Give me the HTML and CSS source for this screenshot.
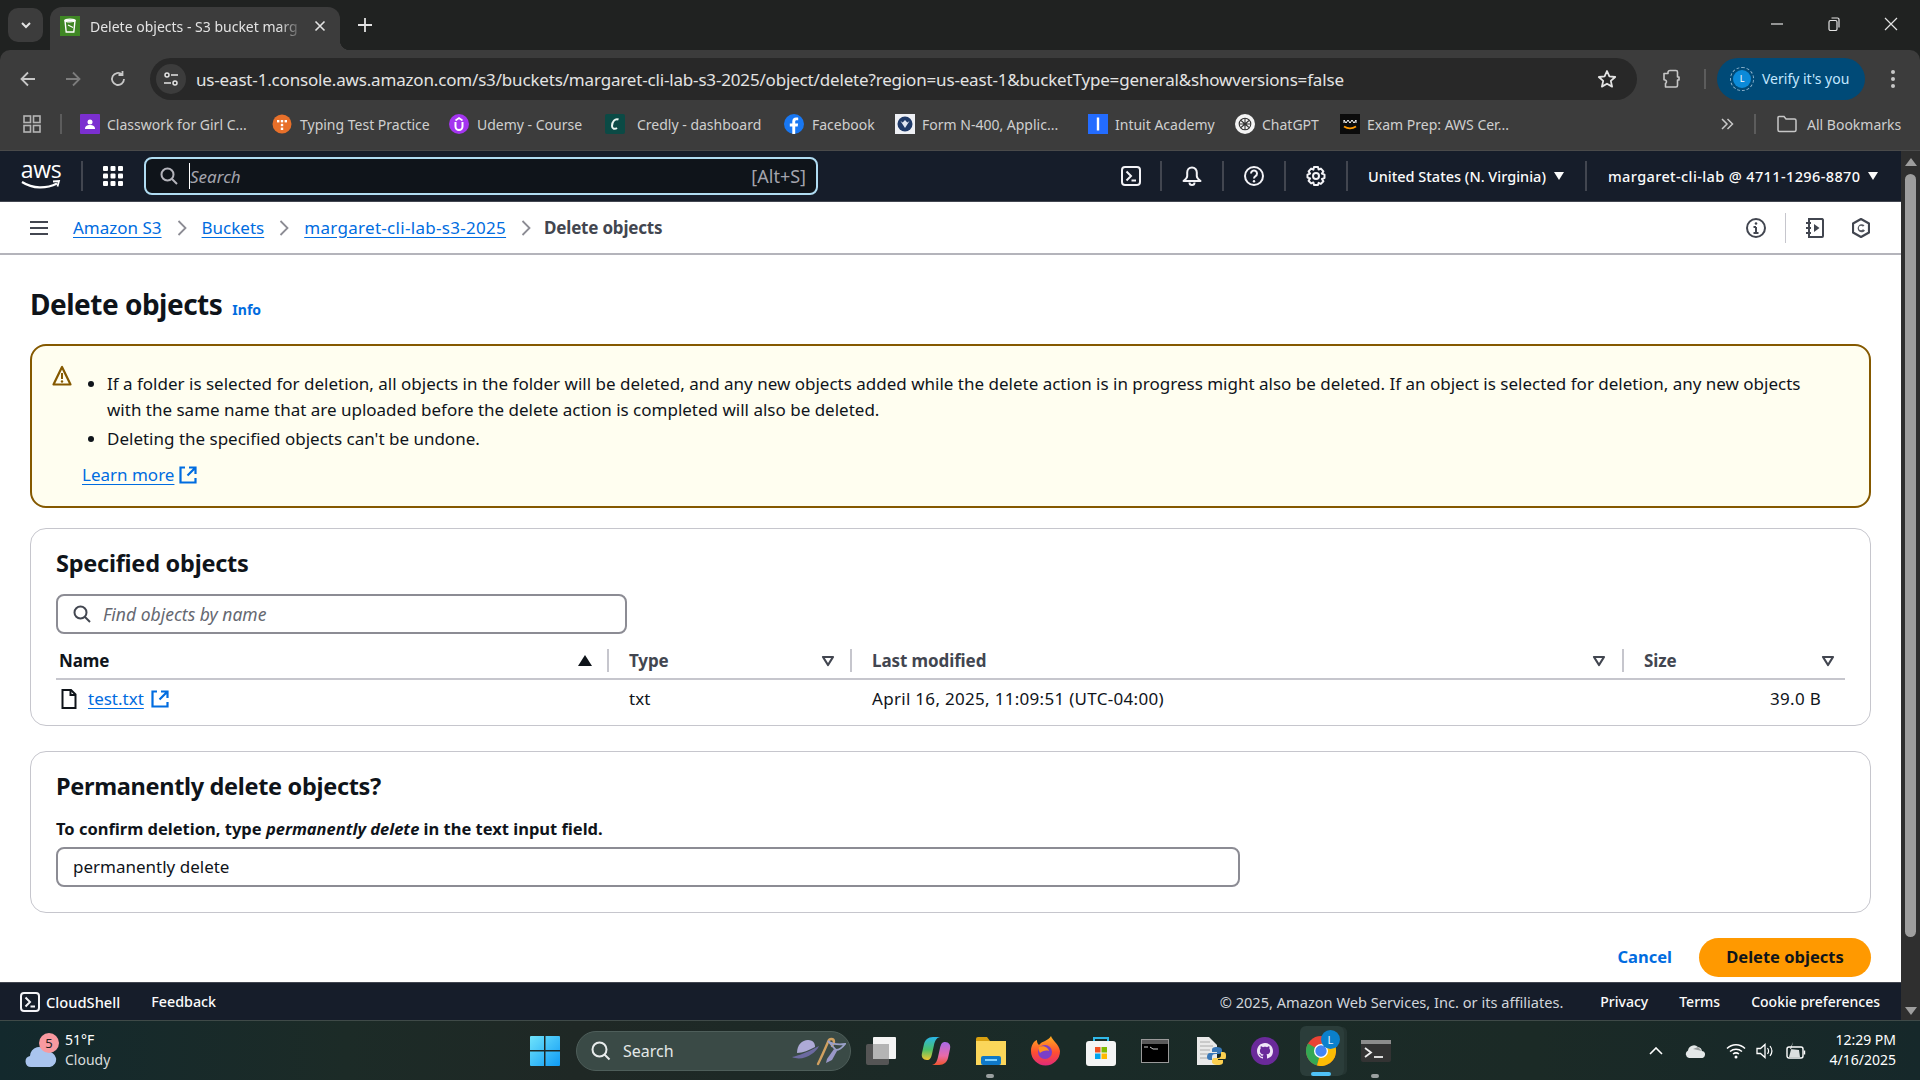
FILE: index.html
```html
<!DOCTYPE html>
<html lang="en">
<head>
<meta charset="utf-8">
<title>Delete objects - S3 bucket</title>
<link rel="stylesheet" href="styles.css">
</head>
<body>
<header class="browser">
  <div class="tabstrip">
    <button class="tablist"><svg width="14" height="14" viewBox="0 0 14 14"><path d="M3 5l4 4 4-4" fill="none" stroke="#e3e3e3" stroke-width="2"/></svg></button>
    <div class="tab">
      <svg class="fav" width="20" height="20" viewBox="0 0 20 20"><rect width="20" height="20" fill="#3f8624"/><path d="M5 4.500h10l-1.200 11.500H6.200z" fill="none" stroke="#fff" stroke-width="1.400"/><ellipse cx="10" cy="4.500" rx="5" ry="1.400" fill="none" stroke="#fff" stroke-width="1.200"/><path d="M8 9l5 2.500" stroke="#fff" stroke-width="1.200"/></svg>
      <span class="tabtitle">Delete objects - S3 bucket marg</span>
      <svg width="12" height="12" viewBox="0 0 12 12"><path d="M1.500 1.500l9 9M10.500 1.500l-9 9" stroke="#e3e3e3" stroke-width="1.600"/></svg>
    </div>
    <svg class="newtab" width="16" height="16" viewBox="0 0 16 16"><path d="M8 1v14M1 8h14" stroke="#e3e3e3" stroke-width="1.800"/></svg>
    <div class="winbtns">
      <svg width="14" height="14" viewBox="0 0 14 14"><path d="M1 7h12" stroke="#e3e3e3" stroke-width="1.200"/></svg>
      <svg width="14" height="14" viewBox="0 0 14 14"><rect x="2" y="3.500" width="8" height="10" rx="1.500" fill="none" stroke="#e3e3e3" stroke-width="1.200"/><path d="M4.500 1h6a1.500 1.500 0 0 1 1.500 1.500v8" fill="none" stroke="#e3e3e3" stroke-width="1.200"/></svg>
      <svg width="14" height="14" viewBox="0 0 14 14"><path d="M1 1l12 12M13 1L1 13" stroke="#e3e3e3" stroke-width="1.200"/></svg>
    </div>
  </div>
  <div class="toolbar">
    <div class="navbtns">
      <svg width="18" height="18" viewBox="0 0 18 18"><path d="M16 9H3M9 2.500L2.500 9 9 15.500" fill="none" stroke="#c7c7c7" stroke-width="1.800"/></svg>
      <svg width="18" height="18" viewBox="0 0 18 18"><path d="M2 9h13M9 2.500L15.500 9 9 15.500" fill="none" stroke="#7d7d7d" stroke-width="1.800"/></svg>
      <svg width="18" height="18" viewBox="0 0 18 18"><path d="M15 9a6 6 0 1 1-2-4.500M13.500 1v4h-4" fill="none" stroke="#c7c7c7" stroke-width="1.800"/></svg>
    </div>
    <div class="omnibox">
      <span class="siteinfo"><svg width="16" height="16" viewBox="0 0 16 16"><circle cx="4" cy="4" r="2" fill="none" stroke="#e3e3e3" stroke-width="1.500"/><circle cx="12" cy="12" r="2" fill="none" stroke="#e3e3e3" stroke-width="1.500"/><path d="M8 4h7M1 12h7" stroke="#e3e3e3" stroke-width="1.500"/></svg></span>
      <span class="url">us-east-1.console.aws.amazon.com/s3/buckets/margaret-cli-lab-s3-2025/object/delete?region=us-east-1&amp;bucketType=general&amp;showversions=false</span>
      <svg class="star" width="20" height="20" viewBox="0 0 20 20"><path d="M10 2l2.400 5.400 5.800.6-4.400 3.900 1.300 5.700L10 14.700l-5.100 2.900 1.300-5.700L1.800 8l5.800-.6z" fill="none" stroke="#e3e3e3" stroke-width="1.800" stroke-linejoin="round"/></svg>
    </div>
    <svg class="ext" width="20" height="20" viewBox="0 0 20 20"><path d="M3 4.500h4V3a2 2 0 0 1 2-1.500h6a1.500 1.500 0 0 1 1.500 1.500v5h1.500v3h-1.500v5.500a1.500 1.500 0 0 1-1.500 1.500H4.500v-3.500a2 2 0 0 0 .5-3c-.5-.5-1-.7-2-.7z" fill="none" stroke="#c7c7c7" stroke-width="1.600" stroke-linejoin="round"/></svg>
    <span class="tsep"></span>
    <div class="verify">
      <span class="avatar"><span class="avatar-l">L</span></span>
      <span>Verify it's you</span>
    </div>
    <svg class="kebab" width="6" height="20" viewBox="0 0 6 20"><circle cx="3" cy="3" r="2" fill="#c7c7c7"/><circle cx="3" cy="10" r="2" fill="#c7c7c7"/><circle cx="3" cy="17" r="2" fill="#c7c7c7"/></svg>
  </div>
  <div class="bookmarks">
    <svg class="bm-apps" width="18" height="18" viewBox="0 0 18 18"><g fill="none" stroke="#b5b5b5" stroke-width="1.600"><rect x="1" y="1" width="6.500" height="6.500"/><rect x="10.500" y="1" width="6.500" height="6.500"/><rect x="1" y="10.500" width="6.500" height="6.500"/><rect x="10.500" y="10.500" width="6.500" height="6.500"/></g></svg>
    <span class="bsep"></span>
    <a class="bm w1"><svg width="20" height="20" viewBox="0 0 20 20"><rect width="20" height="20" rx="1" fill="#7b2fd0"/><circle cx="10" cy="8" r="2.500" fill="#fff"/><path d="M5 15c0-3 2-4 5-4s5 1 5 4z" fill="#fff"/></svg><span>Classwork for Girl C...</span></a>
    <a class="bm w2"><svg width="20" height="20" viewBox="0 0 20 20"><circle cx="10" cy="10" r="9.500" fill="#e8702a"/><g fill="#fff"><rect x="5" y="6" width="2.400" height="2.400"/><rect x="8.800" y="6" width="2.400" height="2.400"/><rect x="12.600" y="6" width="2.400" height="2.400"/><rect x="8.800" y="9.800" width="2.400" height="2.400"/><rect x="8.800" y="13.600" width="2.400" height="2.400"/></g></svg><span>Typing Test Practice</span></a>
    <a class="bm w3"><svg width="20" height="20" viewBox="0 0 20 20"><circle cx="10" cy="10" r="10" fill="#a435f0"/><path d="M6.500 8v4.500a3.500 3.500 0 0 0 7 0V8" fill="none" stroke="#fff" stroke-width="2"/><path d="M6.500 6.500L10 4l3.500 2.500" fill="none" stroke="#fff" stroke-width="1.600"/></svg><span>Udemy - Course</span></a>
    <a class="bm w4"><svg width="20" height="20" viewBox="0 0 20 20"><rect width="20" height="20" rx="2" fill="#0b4a45"/><path d="M13.500 5.500C10 4 7 8 7 12c0 3 3 3.500 5 2" fill="none" stroke="#e8f5f0" stroke-width="2"/></svg><span>Credly - dashboard</span></a>
    <a class="bm w5"><svg width="20" height="20" viewBox="0 0 20 20"><circle cx="10" cy="10" r="10" fill="#1877f2"/><path d="M11.200 20v-7.500h2.500l.4-3h-2.900V7.800c0-.9.300-1.500 1.500-1.500h1.500V3.700c-.3 0-1.200-.1-2.200-.1-2.200 0-3.700 1.300-3.700 3.800v2.100H5.800v3h2.500V20z" fill="#fff"/></svg><span>Facebook</span></a>
    <a class="bm w6"><svg width="20" height="20" viewBox="0 0 20 20"><rect width="20" height="20" fill="#eef0f5"/><circle cx="10" cy="10" r="7.500" fill="#1f3a68"/><path d="M5.500 7L10 14l4.500-7-2.200 1.500L10 6 7.700 8.500z" fill="#dfe6f2"/></svg><span>Form N-400, Applic...</span></a>
    <a class="bm w7"><svg width="20" height="20" viewBox="0 0 20 20"><rect width="20" height="20" fill="#236cff"/><rect x="8.800" y="3.500" width="2.400" height="13" fill="#fff"/></svg><span>Intuit Academy</span></a>
    <a class="bm w8"><svg width="20" height="20" viewBox="0 0 20 20"><circle cx="10" cy="10" r="10" fill="#f4f4f4"/><g fill="none" stroke="#333" stroke-width="1.100"><circle cx="10" cy="10" r="5.800"/><path d="M6 6.500l8 7M14 6.500l-8 7M10 4v12M4.500 10h11"/></g></svg><span>ChatGPT</span></a>
    <a class="bm w9"><svg width="20" height="20" viewBox="0 0 20 20"><rect width="20" height="20" fill="#0b0b0b"/><path d="M4 12.500c4 2.500 8 2.500 12 0" fill="none" stroke="#f90" stroke-width="1.800"/><path d="M4 9V6l2 3 2-3 2 3 2-3 2 3 2-3v3" fill="none" stroke="#fff" stroke-width="1"/></svg><span>Exam Prep: AWS Cer...</span></a>
    <svg class="bm-more" width="14" height="14" viewBox="0 0 14 14"><path d="M2 2l5 5-5 5M7.500 2l5 5-5 5" fill="none" stroke="#c7c7c7" stroke-width="1.500"/></svg>
    <span class="bsep b2"></span>
    <a class="bm allb"><svg width="20" height="18" viewBox="0 0 20 18"><path d="M1 2.500a1 1 0 0 1 1-1h5l2 2.500h8.500a1.500 1.500 0 0 1 1.500 1.500v9.500a1.500 1.500 0 0 1-1.500 1.500H2.500A1.500 1.500 0 0 1 1 15z" fill="none" stroke="#c7c7c7" stroke-width="1.500"/></svg><span>All Bookmarks</span></a>
  </div>
</header>

<div class="console">
  <div class="console-main">
    <nav class="awsnav">
      <div class="awslogo"><span class="awstext">aws</span><svg width="40" height="11" viewBox="0 0 40 11"><path d="M1 2c11 7 24 7 35 1.500" fill="none" stroke="#fff" stroke-width="2.200"/><path d="M32 1.500l6-.5-1.500 5.500" fill="none" stroke="#fff" stroke-width="1.800"/></svg></div>
      <span class="nsep first"></span>
      <svg class="nineg" width="20" height="20" viewBox="0 0 20 20"><g fill="#fff"><rect width="5" height="5" rx="1"/><rect x="7.500" width="5" height="5" rx="1"/><rect x="15" width="5" height="5" rx="1"/><rect y="7.500" width="5" height="5" rx="1"/><rect x="7.500" y="7.500" width="5" height="5" rx="1"/><rect x="15" y="7.500" width="5" height="5" rx="1"/><rect y="15" width="5" height="5" rx="1"/><rect x="7.500" y="15" width="5" height="5" rx="1"/><rect x="15" y="15" width="5" height="5" rx="1"/></g></svg>
      <div class="awssearch">
        <svg width="18" height="18" viewBox="0 0 18 18"><circle cx="7.500" cy="7.500" r="6" fill="none" stroke="#b4b4bb" stroke-width="2"/><path d="M12 12l5 5" stroke="#b4b4bb" stroke-width="2"/></svg>
        <span class="caret"></span>
        <span class="ph">Search</span>
        <span class="kbd">[Alt+S]</span>
      </div>
      <div class="navright">
        <span class="slot"><svg class="s1" width="20" height="20" viewBox="0 0 20 20"><rect x="1" y="1" width="18" height="18" rx="3" fill="none" stroke="#f3f3f7" stroke-width="2"/><path d="M5.500 5.500l4.500 4.500-4.500 4.500M10.500 14.500h4.500" fill="none" stroke="#f3f3f7" stroke-width="2"/></svg></span>
        <span class="slot"><svg width="20" height="20" viewBox="0 0 20 20"><path d="M10 1.500c-3 0-4.800 2.200-4.800 5v3.500c0 2-1 3-3.700 5h17c-2.700-2-3.700-3-3.700-5V6.500c0-2.800-1.800-5-4.800-5z" fill="none" stroke="#f3f3f7" stroke-width="2" stroke-linejoin="round"/><path d="M7.500 16.500a2.500 2.500 0 0 0 5 0" fill="none" stroke="#f3f3f7" stroke-width="2"/></svg></span>
        <span class="slot"><svg width="20" height="20" viewBox="0 0 20 20"><circle cx="10" cy="10" r="9" fill="none" stroke="#f3f3f7" stroke-width="2"/><path d="M7 7.500a3 3 0 1 1 4.500 2.600c-1 .6-1.500 1.100-1.500 2.400" fill="none" stroke="#f3f3f7" stroke-width="2"/><circle cx="10" cy="15.200" r="1.200" fill="#f3f3f7"/></svg></span>
        <span class="slot"><svg width="20" height="20" viewBox="0 0 20 20"><circle cx="10" cy="10" r="3" fill="none" stroke="#f3f3f7" stroke-width="2"/><path d="M8 1h4l.6 2.600 2.300-1 2.500 2.800-1.500 2.200 2.600 1v3.500l-2.600.8 1.500 2.300-2.500 2.700-2.300-1L12 19H8l-.6-2.600-2.300 1-2.500-2.700 1.500-2.300-2.600-.8V8.600l2.600-1-1.500-2.200 2.500-2.800 2.300 1z" fill="none" stroke="#f3f3f7" stroke-width="2" stroke-linejoin="round"/></svg></span>
        <span class="slot region"><span>United States (N. Virginia)</span><i class="tri"></i></span>
        <span class="account"><span class="acct">margaret-cli-lab @ 4711-1296-8870</span><i class="tri"></i></span>
      </div>
    </nav>

    <div class="crumbbar">
      <svg class="burger" width="18" height="14" viewBox="0 0 18 14"><path d="M0 1h18M0 7h18M0 13h18" stroke="#424650" stroke-width="2"/></svg>
      <a class="lnk crumb c1">Amazon S3</a>
      <svg class="chev" width="10" height="16" viewBox="0 0 10 16"><path d="M1.500 1l7 7-7 7" fill="none" stroke="#8c8c94" stroke-width="1.800"/></svg>
      <a class="lnk crumb c2">Buckets</a>
      <svg class="chev" width="10" height="16" viewBox="0 0 10 16"><path d="M1.500 1l7 7-7 7" fill="none" stroke="#8c8c94" stroke-width="1.800"/></svg>
      <a class="lnk crumb c3">margaret-cli-lab-s3-2025</a>
      <svg class="chev last" width="10" height="16" viewBox="0 0 10 16"><path d="M1.500 1l7 7-7 7" fill="none" stroke="#8c8c94" stroke-width="1.800"/></svg>
      <b class="crumb-cur">Delete objects</b>
      <div class="crumb-right">
        <svg width="20" height="20" viewBox="0 0 20 20"><circle cx="10" cy="10" r="9" fill="none" stroke="#424650" stroke-width="2"/><path d="M10 9v6M7.500 15h5M7.500 9H10" fill="none" stroke="#424650" stroke-width="2"/><circle cx="10" cy="5.500" r="1.300" fill="#424650"/></svg>
        <span class="csep"></span>
        <svg class="nb" width="20" height="20" viewBox="0 0 20 20"><path d="M4 1h13a2 2 0 0 1 1 1v16a1 1 0 0 1-1 1H4z" fill="none" stroke="#424650" stroke-width="2"/><path d="M1 5h5M1 10h5M1 15h5" stroke="#424650" stroke-width="2"/><path d="M9 6v8l5.500-4z" fill="#424650"/></svg>
        <svg class="sh" width="18" height="20" viewBox="0 0 18 20"><path d="M9 1l8 4.500v9L9 19l-8-4.500v-9z" fill="none" stroke="#424650" stroke-width="2.200" stroke-linejoin="round"/><path d="M12.500 7.500A4 4 0 1 0 13 12.500L9 10z" fill="#424650" opacity=".9"/><circle cx="9" cy="10" r="2.200" fill="#fff"/></svg>
      </div>
    </div>

    <main class="content">
      <div class="titlerow">
        <h1>Delete objects</h1>
        <a class="info">Info</a>
      </div>

      <section class="alert">
        <svg class="warn" width="20" height="22" viewBox="0 0 20 22"><path d="M10 2L1.500 19.500h17z" fill="none" stroke="#855900" stroke-width="2.200" stroke-linejoin="round"/><path d="M10 8v6" stroke="#855900" stroke-width="2"/><circle cx="10" cy="16.500" r="1.200" fill="#855900"/></svg>
        <div class="alertbody">
          <ul>
            <li>If a folder is selected for deletion, all objects in the folder will be deleted, and any new objects added while the delete action is in progress might also be deleted. If an object is selected for deletion, any new objects with the same name that are uploaded before the delete action is completed will also be deleted.</li>
            <li>Deleting the specified objects can't be undone.</li>
          </ul>
          <div class="learn"><a class="lnk">Learn more</a><svg class="extlink" width="18" height="18" viewBox="0 0 18 18"><path d="M6 1.500H1.500v15h15V12M10 1.500h6.500V8M16 2l-7.500 7.500" fill="none" stroke="#006ce0" stroke-width="2.200"/></svg></div>
        </div>
      </section>

      <section class="card objects">
        <h2>Specified objects</h2>
        <div class="finder">
          <svg width="18" height="18" viewBox="0 0 18 18"><circle cx="7.500" cy="7.500" r="6" fill="none" stroke="#424650" stroke-width="2"/><path d="M12 12l5 5" stroke="#424650" stroke-width="2"/></svg>
          <span class="ph2">Find objects by name</span>
        </div>
        <div class="table">
          <div class="thead">
            <div class="col cname"><b class="dark">Name</b><i class="sortup"></i></div>
            <div class="col ctype"><b>Type</b><svg class="sort" width="14" height="12" viewBox="0 0 14 12"><path d="M2 2h10L7 10z" fill="none" stroke="#424650" stroke-width="2.200" stroke-linejoin="round"/></svg></div>
            <div class="col cmod"><b>Last modified</b><svg class="sort" width="14" height="12" viewBox="0 0 14 12"><path d="M2 2h10L7 10z" fill="none" stroke="#424650" stroke-width="2.200" stroke-linejoin="round"/></svg></div>
            <div class="col csize"><b>Size</b><svg class="sort" width="14" height="12" viewBox="0 0 14 12"><path d="M2 2h10L7 10z" fill="none" stroke="#424650" stroke-width="2.200" stroke-linejoin="round"/></svg></div>
          </div>
          <div class="trow">
            <div class="cell cname"><svg class="fileic" width="16" height="20" viewBox="0 0 16 20"><path d="M1.500 1h8.500l4.500 4.500V19h-13z" fill="none" stroke="#0f141a" stroke-width="2"/><path d="M9.500 1v5h5" fill="none" stroke="#0f141a" stroke-width="2"/></svg><a class="lnk">test.txt</a><svg class="extlink" width="18" height="18" viewBox="0 0 18 18"><path d="M6 1.500H1.500v15h15V12M10 1.500h6.500V8M16 2l-7.500 7.500" fill="none" stroke="#006ce0" stroke-width="2.200"/></svg></div>
            <div class="cell ctype">txt</div>
            <div class="cell cmod">April 16, 2025, 11:09:51 (UTC-04:00)</div>
            <div class="cell csize">39.0 B</div>
          </div>
        </div>
      </section>

      <section class="card confirm">
        <h2>Permanently delete objects?</h2>
        <label class="flabel">To confirm deletion, type <em>permanently delete</em> in the text input field.</label>
        <div class="textbox">permanently delete</div>
      </section>

      <div class="actions">
        <a class="cancel">Cancel</a>
        <a class="primary">Delete objects</a>
      </div>
    </main>

    <footer class="awsfoot">
      <svg width="20" height="20" viewBox="0 0 20 20"><rect x="1" y="1" width="18" height="18" rx="3" fill="none" stroke="#f3f3f7" stroke-width="2"/><path d="M5.500 5.500l4.500 4.500-4.500 4.500M10.500 14.500h4.500" fill="none" stroke="#f3f3f7" stroke-width="2"/></svg>
      <b class="fcs">CloudShell</b>
      <b class="ffb">Feedback</b>
      <div class="fright">
        <span class="copy">© 2025, Amazon Web Services, Inc. or its affiliates.</span>
        <b>Privacy</b>
        <b>Terms</b>
        <b>Cookie preferences</b>
      </div>
    </footer>
  </div>
  <aside class="scrollbar">
    <i class="sup"></i>
    <i class="thumb"></i>
    <i class="sdown"></i>
  </aside>
</div>

<footer class="taskbar">
  <div class="weather">
    <span class="wicon">
      <svg width="32" height="24" viewBox="0 0 32 24"><path d="M6 23a5.500 5.500 0 0 1-1-10.900A9 9 0 0 1 22 8a7.500 7.500 0 0 1 3 15z" fill="#a9c4ee"/></svg>
      <span class="wbadge">5</span>
    </span>
    <span class="wtext"><span>51°F</span><span class="wsub">Cloudy</span></span>
  </div>
  <div class="apps">
    <span class="app"><svg width="30" height="30" viewBox="0 0 30 30"><defs><linearGradient id="win" x1="0" y1="0" x2="1" y2="1"><stop offset="0" stop-color="#6fe3fb"/><stop offset="1" stop-color="#0f9bf5"/></linearGradient></defs><path d="M0 1a1 1 0 0 1 1-1h13v14H0zM15.500 0H29a1 1 0 0 1 1 1v13H15.500zM0 15.500h14V30H1a1 1 0 0 1-1-1zM15.500 15.500H30V29a1 1 0 0 1-1 1H15.500z" fill="url(#win)"/></svg></span>
    <div class="tsearch">
      <svg width="20" height="20" viewBox="0 0 20 20"><circle cx="8.500" cy="8.500" r="7" fill="none" stroke="#e8ecec" stroke-width="2"/><path d="M13.500 13.500l5 5" stroke="#e8ecec" stroke-width="2"/></svg>
      <span>Search</span>
      <svg class="deco" width="56" height="30" viewBox="0 0 56 30"><path d="M2 21c6-1 18-6 27-11-3 7-16 16-27 11z" fill="#6c6aa0"/><path d="M7 17c0-8 5-13 11-13s7 4 7 7c-6 3-12 6-18 6z" fill="#aeaad6"/><path d="M28 28c3-6 7-15 10-22 1-4 6-4 6 0 0 2-1 3-2 4" fill="none" stroke="#d0a060" stroke-width="2.400" stroke-linecap="round"/><path d="M38 5c4 3 10 4 17 3-3 4-6 6-9 6z" fill="none" stroke="#9aa0c8" stroke-width="1.800"/><path d="M44 13l-7 10-1 4 6-3 5-9z" fill="#9a98c8"/></svg>
    </div>
    <span class="app"><svg width="30" height="28" viewBox="0 0 30 28"><rect x="0" y="7" width="23" height="21" rx="2" fill="#555"/><rect x="7" y="0" width="23" height="22" rx="1" fill="#f4f4f4"/><rect x="7" y="7" width="16" height="15" fill="#b4b4b4"/></svg></span>
    <span class="app"><svg width="30" height="30" viewBox="0 0 30 30"><defs><linearGradient id="copa" x1="0" y1="0" x2="0" y2="1"><stop offset="0" stop-color="#29b6e8"/><stop offset=".55" stop-color="#4cc06a"/><stop offset="1" stop-color="#f2c530"/></linearGradient><linearGradient id="copb" x1="0" y1="0" x2="0" y2="1"><stop offset="0" stop-color="#a86ae8"/><stop offset=".6" stop-color="#e86aa8"/><stop offset="1" stop-color="#f0552e"/></linearGradient></defs><path d="M12 1h7c-4 1-5 4-6 8l-2 9c-1 4-2 6-5 6-4 0-6-3-5-7l2-9c1-4 4-7 9-7z" fill="url(#copa)"/><path d="M18 29h-7c4-1 5-4 6-8l2-9c1-4 2-6 5-6 4 0 6 3 5 7l-2 9c-1 4-4 7-9 7z" fill="url(#copb)"/></svg></span>
    <span class="app dotted"><svg width="30" height="28" viewBox="0 0 30 28"><path d="M0 2a2 2 0 0 1 2-2h9l3 4h-14z" fill="#d8a010"/><rect y="4" width="30" height="24" fill="#fbd65a"/><rect x="5" y="19" width="20" height="9" rx="2" fill="#0f78c8"/><rect x="9" y="22" width="12" height="2" fill="#7fd0ff"/></svg><i class="dot"></i></span>
    <span class="app"><svg width="30" height="30" viewBox="0 0 30 30"><defs><linearGradient id="ff" x1="0" y1="0" x2="0" y2="1"><stop offset="0" stop-color="#ffb020"/><stop offset=".55" stop-color="#ff5030"/><stop offset="1" stop-color="#e02a7a"/></linearGradient></defs><path d="M20 0c1 4 8 8 9 15a14.500 14.500 0 1 1-29 0C0 9 3 5 6 4c0 2 0 3 2 5 3-4 9-4 12-9z" fill="url(#ff)"/><circle cx="14" cy="16" r="7" fill="#7b3fc8"/><path d="M8 11c4-2 9 0 10 4-3-1-7 0-9 2-1-2-2-4-1-6z" fill="#ff9020"/></svg></span>
    <span class="app"><svg width="30" height="30" viewBox="0 0 30 30"><path d="M8 7V2h14v5" fill="none" stroke="#30b8e8" stroke-width="2"/><rect y="5" width="30" height="25" rx="3" fill="#f4f4f4"/><rect x="9" y="11" width="5.500" height="5.500" fill="#f25022"/><rect x="15.500" y="11" width="5.500" height="5.500" fill="#7fba00"/><rect x="9" y="17.500" width="5.500" height="5.500" fill="#00a4ef"/><rect x="15.500" y="17.500" width="5.500" height="5.500" fill="#ffb900"/></svg></span>
    <span class="app"><svg width="28" height="24" viewBox="0 0 28 24"><rect width="28" height="24" fill="#9a9a9a"/><rect x="1" y="1" width="26" height="4" fill="#5a5a5a"/><rect x="1" y="5" width="26" height="18" fill="#000"/><path d="M3 8h4M9 8l3 2h5" stroke="#ccc" stroke-width="1"/></svg></span>
    <span class="app"><svg width="30" height="30" viewBox="0 0 30 30"><path d="M1 1h12l8 8v20H1z" fill="#e9e9e9"/><path d="M4 6h10M4 10h13M4 14h10M4 18h10M4 22h10" stroke="#aaa" stroke-width="1"/><path d="M21 11c-4 0-5 1-5 3v2h5v1h-7c-2 0-3 2-3 4s1 3 3 3h2v-3c0-2 1-3 3-3h4c2 0 3-1 3-3v-1c0-2-2-3-5-3z" fill="#3a78b8"/><path d="M22 29c4 0 5-1 5-3v-2h-5v-1h7c1 0 1-2 1-4s-1-3-3-3h-2v3c0 2-1 3-3 3h-4c-1 0-2 1-2 3v1c0 2 3 3 6 3z" fill="#fcd050"/></svg></span>
    <span class="app"><svg width="28" height="28" viewBox="-6 -6 28 28"><circle cx="8" cy="8" r="14" fill="#6a2a9a"/><path d="M8 0C3.580 0 0 3.580 0 8c0 3.540 2.290 6.530 5.470 7.590.4.070.55-.17.55-.38 0-.19-.01-.82-.01-1.490-2.010.37-2.530-.49-2.690-.94-.09-.23-.48-.94-.82-1.130-.28-.15-.68-.52-.01-.53.63-.01 1.080.58 1.230.82.72 1.210 1.870.87 2.330.66.070-.52.28-.87.51-1.070-1.780-.2-3.640-.89-3.640-3.950 0-.87.31-1.590.82-2.150-.08-.2-.36-1.020.08-2.120 0 0 .67-.21 2.200.82.64-.18 1.320-.27 2-.27s1.360.09 2 .27c1.530-1.040 2.200-.82 2.200-.82.44 1.100.16 1.920.08 2.120.51.56.82 1.270.82 2.150 0 3.070-1.870 3.750-3.650 3.950.29.25.54.73.54 1.480 0 1.070-.01 1.930-.01 2.200 0 .21.15.46.55.38A8.013 8.013 0 0 0 16 8c0-4.420-3.580-8-8-8z" fill="#f0e6f8"/></svg></span>
    <span class="app active"><svg width="30" height="30" viewBox="0 0 30 30"><circle cx="15" cy="15" r="15" fill="#ea4335"/><path d="M15 15L2 7.500A15 15 0 0 0 11 29.500z" fill="#34a853"/><path d="M15 7.500h13A15 15 0 0 1 11 29.500L15 15z" fill="#fbbc04"/><circle cx="15" cy="15" r="7" fill="#fff"/><circle cx="15" cy="15" r="5.700" fill="#4285f4"/></svg><span class="cbadge">L</span><i class="bar"></i></span>
    <span class="app dotted"><svg width="30" height="22" viewBox="0 0 30 22"><rect width="30" height="22" rx="2" fill="#333"/><rect width="30" height="4" fill="#8c8c8c"/><path d="M4 8l6 4.500L4 17" fill="none" stroke="#eee" stroke-width="1.800"/><path d="M13 17h9" stroke="#eee" stroke-width="1.800"/></svg><i class="dot"></i></span>
  </div>
  <div class="tray">
    <svg class="t1" width="14" height="8" viewBox="0 0 14 8"><path d="M1 7l6-6 6 6" fill="none" stroke="#fff" stroke-width="1.600"/></svg>
    <svg class="t2" width="20" height="14" viewBox="0 0 20 14"><path d="M4 14a4 4 0 0 1-1-7.500A6 6 0 0 1 13 3a5 5 0 0 1 4 4 3.500 3.500 0 0 1-1 7z" fill="#e4e8e8"/><path d="M8 5l5-2 4 4z" fill="#9a9e9e"/></svg>
    <svg class="t3" width="20" height="16" viewBox="0 0 20 16"><g fill="none" stroke="#fff" stroke-width="1.500"><path d="M1 5.500c5-5 13-5 18 0M4 8.500c3.500-3 8.500-3 12 0M7 11c2-1.500 4-1.500 6 0"/></g><circle cx="10" cy="14" r="1.500" fill="#fff"/></svg>
    <svg class="t4" width="18" height="16" viewBox="0 0 18 16"><path d="M1 5.500h3.500L9 1.500v13l-4.500-4H1z" fill="none" stroke="#fff" stroke-width="1.300"/><path d="M11.500 5c1.300 1.800 1.300 4.200 0 6M14 3c2.300 3 2.300 7 0 10" fill="none" stroke="#fff" stroke-width="1.200"/></svg>
    <svg class="t5" width="20" height="18" viewBox="0 0 20 18"><rect x="1" y="5" width="16" height="11" rx="2" fill="none" stroke="#fff" stroke-width="1.400"/><path d="M18.500 8.500v4" stroke="#fff" stroke-width="1.400"/><path d="M7 0L4 7l9 1 1 7H3z" fill="#fff" opacity=".85"/></svg>
    <div class="clock"><span>12:29 PM</span><span>4/16/2025</span></div>
  </div>
</footer>
</body>
</html>
```

FILE: styles.css
```css
* { box-sizing: border-box; }
html, body { margin: 0; height: 100%; }
body {
  display: flex;
  flex-direction: column;
  height: 1080px;
  width: 1920px;
  overflow: hidden;
  font-family: "Noto Sans", "Open Sans", sans-serif;
  background: #202221;
}
svg { display: block; flex: none; }
i { display: block; font-style: normal; }

/* browser chrome */
.browser { height: 151px; flex: none; background: #202221; color: #e3e3e3; }
.tabstrip { height: 50px; display: flex; align-items: flex-end; position: relative; padding-left: 8px; }
.tablist {
  width: 35px; height: 34px; margin-bottom: 8px; border: 0; padding: 0;
  background: #3c3c3c; border-radius: 10px;
  display: flex; align-items: center; justify-content: center;
}
.tab {
  width: 290px; height: 43px; margin-left: 7px; padding: 0 14px 5px 10px;
  background: #3c3c3c; border-radius: 12px 12px 0 0;
  display: flex; align-items: center; gap: 10px;
  font-size: 14px; color: #e3e3e3;
  position: relative;
}
.tab::after {
  content: ""; position: absolute; right: -10px; bottom: 0; width: 10px; height: 10px;
  background: radial-gradient(circle at 100% 0, transparent 10px, #3c3c3c 10.5px);
}
.tabtitle {
  flex: 1; white-space: nowrap; overflow: hidden; font-size: 14px;
  -webkit-mask-image: linear-gradient(90deg, #000 88%, transparent);
  mask-image: linear-gradient(90deg, #000 88%, transparent);
}
.newtab { margin: 0 0 17px 17px; }
.winbtns { margin-left: auto; display: flex; gap: 43px; padding-right: 22px; margin-bottom: 19px; }

.toolbar {
  height: 50px; background: #3c3c3c; border-radius: 10px 10px 0 0;
  display: flex; align-items: flex-end; padding-bottom: 0;
}
.navbtns { display: flex; gap: 27px; padding: 0 0 12px 19px; width: 150px; }
.omnibox {
  width: 1487px; height: 42px; background: #282828; border-radius: 21px;
  display: flex; align-items: center; padding: 0 20px 0 6px;
}
.siteinfo {
  width: 30px; height: 30px; border-radius: 50%; background: #3c3c3c;
  display: flex; align-items: center; justify-content: center; flex: none;
}
.url { margin-left: 10px; font-size: 17px; color: #e3e3e3; white-space: nowrap; flex: 1; letter-spacing: -.17px; }
.ext { margin: 0 0 11px 24px; }
.tsep { width: 2px; height: 20px; background: #5c5c5c; margin: 0 11px 11px 23px; }
.verify {
  width: 148px; height: 42px; background: #004a77; border-radius: 21px;
  display: flex; align-items: center; gap: 8px; padding: 0 0 1px 14px;
  font-size: 14px; color: #c2e7ff; white-space: nowrap;
}
.avatar {
  width: 24px; height: 24px; border-radius: 50%; border: 1.5px dashed #8fb4cc;
  display: flex; align-items: center; justify-content: center; flex: none; margin-left: -1px;
}
.avatar-l {
  width: 18px; height: 18px; border-radius: 50%; background: #0b8ad8; color: #fff;
  font-size: 9px; line-height: 18px; text-align: center; flex: none;
}
.kebab { margin: 0 0 11px 25px; }

.bookmarks {
  height: 51px; background: #3c3c3c; border-bottom: 1px solid #4a4a4a;
  display: flex; align-items: center; padding: 0 0 2px 23px;
  font-size: 14px; color: #cfcfcf;
}
.bsep { width: 2px; height: 20px; background: #5c5c5c; margin: 0 18px 0 19px; flex: none; }
.bsep.b2 { margin: 0 21px 0 20px; }
.bm { display: flex; align-items: center; gap: 8px; white-space: nowrap; flex: none; }
.w1 { width: 192px; gap: 7px; } .w2 { width: 177px; } .w3 { width: 156px; } .w4 { width: 179px; gap: 12px; }
.w5 { width: 111px; } .w6 { width: 193px; gap: 7px; } .w7 { width: 147px; gap: 7px; } .w8 { width: 105px; gap: 7px; } .w9 { width: 180px; gap: 7px; }
.bm-more { margin-left: 200px; }
.allb { gap: 10px; }

/* console */
.console { flex: 1; display: flex; min-height: 0; }
.console-main { flex: 1; min-width: 0; display: flex; flex-direction: column; background: #fff; }
.scrollbar { width: 19px; flex: none; background: #2f2f2f; display: flex; flex-direction: column; align-items: center; padding: 7px 0 5px; }
.sup { width: 0; height: 0; border: 6px solid transparent; border-top: 0; border-bottom: 8px solid #9e9e9e; }
.thumb { width: 11px; height: 763px; margin-top: 8px; border-radius: 6px; background: #9e9e9e; }
.sdown { width: 0; height: 0; margin-top: auto; border: 6px solid transparent; border-bottom: 0; border-top: 8px solid #9e9e9e; }

.awsnav {
  height: 51px; flex: none; background: #161d2a; border-bottom: 1px solid #424650;
  display: flex; align-items: center; padding-left: 20px; color: #fbfbfb;
}
.awslogo { width: 42px; display: flex; flex-direction: column; align-items: center; flex: none; height: 36px; position: relative; }
.awstext { font-family: "Open Sans", sans-serif; font-size: 23px; line-height: 22px; letter-spacing: -.3px; color: #fff; }
.nsep { width: 1px; height: 30px; background: #424650; flex: none; }
.nsep.first { width: 2px; margin: 0 20px 0 19px; }
.awssearch {
  width: 674px; height: 38px; margin-left: 21px; background: #0f141a;
  border: 2px solid #b0dcf2; border-radius: 8px;
  display: flex; align-items: center; padding: 0 10px 0 14px;
}
.caret { width: 1px; height: 26px; background: #fff; margin-left: 11px; }
.ph { font-style: italic; color: #a4a4ad; font-size: 17px; }
.kbd { margin-left: auto; color: #a4a4ad; font-size: 18px; }
.navright { margin-left: auto; display: flex; height: 100%; align-items: center; font-size: 14.5px; font-weight: 500; }
.slot {
  width: 62px; height: 30px; border-right: 2px solid #424650;
  display: flex; align-items: center; justify-content: center; flex: none;
}
.s1 { margin-left: 2px; }
.region { width: 239px; justify-content: flex-start; padding-left: 20px; gap: 8px; white-space: nowrap; }
.account { width: 314px; display: flex; align-items: center; padding-left: 21px; gap: 8px; white-space: nowrap; }
.acct { letter-spacing: .38px; }
.tri { width: 0; height: 0; border-left: 5px solid transparent; border-right: 5px solid transparent; border-top: 8px solid #fbfbfb; flex: none; }

.crumbbar {
  height: 53px; flex: none; border-bottom: 2px solid #b4b4bb; background: #fff;
  display: flex; align-items: center; padding-left: 30px; font-size: 17px;
}
.lnk { color: #006ce0; text-decoration: underline; text-underline-offset: 3px; }
.crumb { white-space: nowrap; }
.c3 { letter-spacing: .3px; }
.burger { margin-right: 25px; }
.chev { margin: 0 15px; }
.chev.last { margin-right: 13px; }
.crumb-cur { color: #424650; white-space: nowrap; letter-spacing: -.2px; }
.crumb-right { margin-left: auto; display: flex; align-items: center; padding-right: 31px; }
.csep { width: 1px; height: 30px; background: #c6c6cd; margin: 0 19px 0 19px; }
.sh { margin-left: 27px; }

.content { flex: 1; min-height: 0; overflow: hidden; padding: 0 30px; color: #0f141a; font-size: 17px; }
.titlerow { height: 89px; display: flex; align-items: center; gap: 10px; padding-top: 9px; }
h1 { margin: 0; font-size: 28px; font-weight: 700; letter-spacing: -.5px; }
.info { color: #006ce0; font-weight: 700; font-size: 14px; margin-top: 10px; }

.alert {
  height: 164px; background: #fffef0; border: 2px solid #855900; border-radius: 16px;
  display: flex; padding: 20px 20px 0;
}
.warn { flex: none; margin-top: -1px; }
.alertbody { margin-left: 10px; font-size: 17px; line-height: 26px; }
ul { margin: 0; padding: 5px 28px 0 25px; }
li { margin-bottom: 3px; }
.learn { display: flex; align-items: center; gap: 5px; margin-top: 10px; }
.extlink { flex: none; }

.card { border: 1px solid #c6c6cd; border-radius: 16px; padding: 0 25px; margin-top: 20px; }
h2 { margin: 0; font-size: 23.5px; font-weight: 700; letter-spacing: -.25px; }
.objects { height: 198px; padding-top: 17px; }
.objects h2 { line-height: 34px; }
.finder {
  width: 571px; height: 40px; margin-top: 14px; border: 2px solid #8c8c94; border-radius: 8px;
  display: flex; align-items: center; padding-left: 15px; gap: 12px;
}
.ph2 { font-style: italic; color: #656871; font-size: 17.5px; }
.table { margin-top: 13px; width: 1789px; font-size: 17px; }
.thead { height: 33px; display: flex; border-bottom: 2px solid #c6c6cd; color: #424650; letter-spacing: -.1px; }
.dark { color: #0f141a; }
.col { height: 23px; margin-top: 2px; display: flex; align-items: center; justify-content: space-between; }
.cname { width: 553px; padding-left: 3px; }
.ctype { width: 243px; padding-left: 20px; }
.cmod { width: 772px; padding-left: 20px; }
.csize { flex: 1; padding-left: 20px; }
.col.cname { padding-right: 15px; border-right: 2px solid #c6c6cd; }
.col.ctype { padding-right: 15px; border-right: 2px solid #c6c6cd; }
.col.cmod { padding-right: 16px; border-right: 2px solid #c6c6cd; }
.col.csize { padding-right: 10px; }
.sort { flex: none; }
.sortup { width: 0; height: 0; border-left: 7px solid transparent; border-right: 7px solid transparent; border-bottom: 11px solid #0f141a; }
.trow { display: flex; height: 37px; align-items: center; }
.cell { white-space: nowrap; }
.cell.cname { display: flex; align-items: center; padding-left: 5px; }
.fileic { margin-right: 11px; }
.cell .extlink { margin-left: 7px; }
.cell.cmod { letter-spacing: .3px; }
.cell.csize { text-align: right; padding-right: 24px; letter-spacing: .3px; }

.confirm { height: 162px; margin-top: 25px; padding-top: 17px; }
.confirm h2 { line-height: 34px; letter-spacing: -.32px; }
.flabel { display: block; font-weight: 700; font-size: 16.5px; line-height: 24px; margin-top: 14px; }
.flabel em { font-style: italic; }
.textbox {
  width: 1184px; height: 40px; margin-top: 6px; border: 2px solid #8c8c94; border-radius: 8px;
  display: flex; align-items: center; padding: 0 0 2px 15px; font-size: 17px;
}
.actions { display: flex; justify-content: flex-end; align-items: center; margin-top: 25px; font-weight: 700; font-size: 16.5px; }
.cancel { color: #006ce0; margin: 0 27px 2px 0; }
.primary { width: 172px; height: 39px; padding-bottom: 2px; background: #ff9900; border-radius: 20px; display: flex; align-items: center; justify-content: center; }

.awsfoot {
  height: 38px; flex: none; background: #161d2a; border-top: 1px solid #424650;
  display: flex; align-items: center; padding: 0 21px 0 20px; color: #fbfbfb; font-size: 14px;
}
.awsfoot b { font-weight: 500; white-space: nowrap; }
.awsfoot .fcs { margin-left: 6px; font-size: 14.7px; }
.awsfoot .ffb { margin-left: 31px; font-size: 14.3px; }
.fright { margin-left: auto; display: flex; gap: 31px; align-items: center; }
.copy { color: #d1d5db; margin-right: 6px; white-space: nowrap; font-size: 14.6px; }

/* taskbar */
.taskbar {
  height: 60px; flex: none; border-top: 1px solid #3f4a48; position: relative;
  background: linear-gradient(90deg, #13292d 0%, #1c2b27 18%, #1f2825 30%, #1a2b28 55%, #1b2a26 80%, #16282a 100%);
  display: flex; align-items: center; color: #fff; font-size: 14px;
}
.weather { width: 530px; display: flex; align-items: center; padding-left: 25px; flex: none; }
.wicon { width: 40px; height: 42px; position: relative; display: block; flex: none; padding-top: 14px; }
.wbadge {
  position: absolute; left: 14px; top: 3px; width: 20px; height: 20px; border-radius: 50%;
  background: #f89aa0; color: #222; font-size: 13px; line-height: 20px; text-align: center;
}
.wtext { display: flex; flex-direction: column; line-height: 20px; font-size: 14px; margin-top: -2px; }
.wsub { color: #d8dcdc; }
.apps { display: flex; align-items: center; flex: none; position: absolute; left: 530px; top: 0; height: 100%; }
.app { width: 55px; height: 60px; display: flex; align-items: center; justify-content: flex-start; position: relative; flex: none; }
.tsearch {
  width: 275px; height: 40px; margin: 0 15px 0 -9px; flex: none;
  background: #3a4a46; border: 1px solid #4e5e5a; border-radius: 20px;
  display: flex; align-items: center; padding: 0 4px 0 14px; gap: 12px;
  font-size: 16px; color: #e4e8e8;
}
.deco { margin-left: auto; }
.dot { position: absolute; left: 10px; bottom: 3px; width: 8px; height: 4px; border-radius: 2px; background: #9aa0a0; }
.active::before {
  content: ""; position: absolute; left: -6px; top: 5px; width: 44px; height: 50px;
  background: #2b3d3a; border-radius: 6px; box-shadow: 4px 0 0 -1px #253532;
}
.active svg { position: relative; }
.cbadge {
  position: absolute; left: 15px; top: 9px; width: 19px; height: 19px; border-radius: 50%;
  background: #0b80cc; color: #e8f4ff; font-size: 11px; line-height: 19px; text-align: center;
}
.bar { position: absolute; left: 5px; bottom: 5px; width: 20px; height: 4px; border-radius: 2px; background: #4fc3f7; }
.tray { position: absolute; right: 0; top: 0; height: 100%; width: 271px; display: flex; align-items: center; }
.t1 { margin-left: 0; }
.t2 { margin-left: 22px; }
.t3 { margin-left: 21px; }
.t4 { margin-left: 10px; }
.t5 { margin-left: 12px; }
.clock { margin-left: auto; padding: 0 24px 2px 0; display: flex; flex-direction: column; align-items: flex-end; line-height: 20px; font-size: 14px; }
```
